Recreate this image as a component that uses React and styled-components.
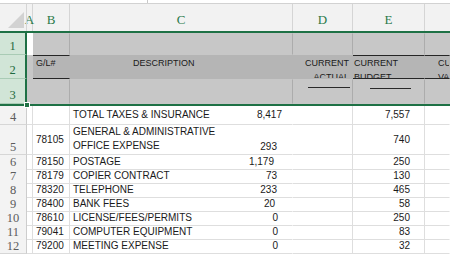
import React from 'react';
import styled, { createGlobalStyle } from 'styled-components';

const GREEN = '#1e7145';
const COLS = '27px 6px 37px 223px 60px 72px 1fr';

const GlobalStyle = createGlobalStyle`
  html, body { margin: 0; padding: 0; background: #fff; overflow: hidden; }
  body { font-family: "Liberation Sans", Arial, sans-serif; }
  * { box-sizing: border-box; }
`;

const Sheet = styled.div`
  width: 450px;
  height: 254px;
  overflow: hidden;
  background: #fff;
`;

const TopStrip = styled.div`
  height: 4px;
  display: flex;
  border-bottom: 1px solid #d2d2d2;
`;

const StripPart = styled.div`
  width: ${(p) => p.$w}px;
  border-right: 1px solid #c9c9c9;
`;

const Row = styled.div`
  display: grid;
  grid-template-columns: ${COLS};
  height: ${(p) => p.$h}px;
`;

const HeaderRow = styled(Row)`
  background: #f2f2f2;
  border-bottom: 2px solid ${GREEN};
`;

const ColHead = styled.div`
  display: flex;
  align-items: center;
  justify-content: center;
  padding-top: 5px;
  border-right: 1px solid ${(p) => (p.$last ? 'transparent' : '#d5d5d5')};
  font-family: "Liberation Serif", "Times New Roman", serif;
  font-size: 13px;
  color: #2a7a4a;
  overflow: visible;
  white-space: nowrap;
`;

const Corner = styled.div`
  position: relative;
  border-right: 1px solid #d5d5d5;
  svg { display: block; }
`;

const RowHead = styled.div`
  display: flex;
  align-items: flex-end;
  justify-content: center;
  padding-bottom: ${(p) => (p.$sel ? 1 : 0)}px;
  background: ${(p) => (p.$sel ? '#d1e5d7' : '#f3f3f3')};
  border-right: ${(p) => (p.$sel ? `2px solid ${GREEN}` : '1px solid #cdcdcd')};
  border-bottom: 1px solid ${(p) => (p.$sel ? '#a9cbb5' : '#d6d6d6')};
  font-family: "Liberation Serif", "Times New Roman", serif;
  font-size: 12.5px;
  line-height: 14px;
  color: ${(p) => (p.$sel ? '#1f6a40' : '#5c5c5c')};
`;

const Selection = styled.div`
  position: relative;
  border-bottom: 2px solid ${GREEN};
`;

const FillHandle = styled.div`
  position: absolute;
  left: 24px;
  bottom: -4px;
  width: 6px;
  height: 6px;
  background: ${GREEN};
  border: 1px solid #fff;
`;

const SelCell = styled.div`
  display: flex;
  flex-direction: column;
  align-items: ${(p) => ({ right: 'flex-end', center: 'center' }[p.$h] || 'flex-start')};
  padding: 0 ${(p) => p.$pr ?? 0}px 0 ${(p) => p.$pl ?? 3}px;
  background: ${(p) => p.$bg || '#c7c7c7'};
  border-right: 1px solid ${(p) => (p.$line ? '#acacac' : 'transparent')};
  border-top: 1px solid ${(p) => (p.$rule ? '#262626' : 'transparent')};
  border-bottom: 1px solid ${(p) => (p.$rule ? '#262626' : 'transparent')};
  font-size: 9px;
  line-height: 14px;
  color: #1a1a1a;
  white-space: nowrap;
  overflow: hidden;
`;

const Underline = styled.div`
  width: ${(p) => p.$w}px;
  margin: ${(p) => p.$top}px ${(p) => p.$mr || 0}px 0 ${(p) => p.$ml || 0}px;
  border-top: 1px solid #2a2a2a;
`;

const Cell = styled.div`
  display: flex;
  align-items: ${(p) => ({ top: 'flex-start', bottom: 'flex-end' }[p.$v] || 'center')};
  justify-content: ${(p) => ({ right: 'flex-end', center: 'center' }[p.$h] || 'flex-start')};
  padding: 0 ${(p) => p.$pr ?? 2}px 0 ${(p) => p.$pl ?? 3}px;
  border-right: 1px solid ${(p) => (p.$noLine ? 'transparent' : '#dedede')};
  border-bottom: 1px solid #dedede;
  font-size: 10px;
  line-height: 14px;
  color: #1a1a1a;
  white-space: nowrap;
  overflow: hidden;
`;

const DescCell = styled(Cell)`
  display: grid;
  grid-template-columns: 1fr auto;
  align-items: stretch;
  padding-right: 0;
`;

const Label = styled.div`
  align-self: ${(p) => (p.$v === 'top' ? 'start' : 'center')};
`;

const Amount = styled.div`
  align-self: ${(p) => (p.$v === 'bottom' ? 'end' : 'center')};
  margin-right: ${(p) => p.$pr}px;
`;

const rows = [
  { n: 4, h: 19, code: '', desc: ['TOTAL TAXES & INSURANCE'], actual: '8,417', apr: 10, budget: '7,557' },
  { n: 5, h: 30, code: '78105', desc: ['GENERAL & ADMINISTRATIVE', 'OFFICE EXPENSE'], actual: '293', apr: 15, budget: '740', tall: true },
  { n: 6, h: 14, code: '78150', desc: ['POSTAGE'], actual: '1,179', apr: 18, budget: '250' },
  { n: 7, h: 14, code: '78179', desc: ['COPIER CONTRACT'], actual: '73', apr: 15, budget: '130' },
  { n: 8, h: 14, code: '78320', desc: ['TELEPHONE'], actual: '233', apr: 15, budget: '465' },
  { n: 9, h: 14, code: '78400', desc: ['BANK FEES'], actual: '20', apr: 17, budget: '58' },
  { n: 10, h: 14, code: '78610', desc: ['LICENSE/FEES/PERMITS'], actual: '0', apr: 14, budget: '250' },
  { n: 11, h: 14, code: '79041', desc: ['COMPUTER EQUIPMENT'], actual: '0', apr: 14, budget: '83' },
  { n: 12, h: 14, code: '79200', desc: ['MEETING EXPENSE'], actual: '0', apr: 14, budget: '32' },
];

const DataRow = ({ r }) => (
  <Row $h={r.h}>
    <RowHead>{r.n}</RowHead>
    <Cell />
    <Cell>{r.code}</Cell>
    <DescCell $noLine>
      <Label $v={r.tall ? 'top' : 'center'}>
        {r.desc.map((d) => (
          <div key={d}>{d}</div>
        ))}
      </Label>
      <Amount $v={r.tall ? 'bottom' : 'center'} $pr={r.apr}>
        {r.actual}
      </Amount>
    </DescCell>
    <Cell />
    <Cell $h="right" $pr={14}>
      {r.budget}
    </Cell>
    <Cell $noLine />
  </Row>
);

const App = () => (
  <>
    <GlobalStyle />
    <Sheet>
      <TopStrip>
        <StripPart $w={148} />
      </TopStrip>

      <HeaderRow $h={29}>
        <Corner>
          <svg width="26" height="27" viewBox="0 0 26 27">
            <polygon points="8,24 24,8 24,24" fill="#d2d2d2" />
          </svg>
        </Corner>
        <ColHead>A</ColHead>
        <ColHead>B</ColHead>
        <ColHead>C</ColHead>
        <ColHead>D</ColHead>
        <ColHead>E</ColHead>
        <ColHead $last />
      </HeaderRow>

      <Selection>
        <Row $h={22}>
          <RowHead $sel>1</RowHead>
          <SelCell $bg="#fff" />
          <SelCell $line />
          <SelCell $line />
          <SelCell $line />
          <SelCell $line />
          <SelCell />
        </Row>
        <Row $h={24}>
          <RowHead $sel>2</RowHead>
          <SelCell />
          <SelCell $bg="#b5b5b5" $rule>G/L#</SelCell>
          <SelCell $bg="#b5b5b5" $pl={63}>DESCRIPTION</SelCell>
          <SelCell $bg="#b5b5b5" $h="right" $pr={3}>
            <div>CURRENT</div>
            <div>ACTUAL</div>
          </SelCell>
          <SelCell $bg="#b5b5b5" $rule $pl={1}>
            <div>CURRENT</div>
            <div>BUDGET</div>
          </SelCell>
          <SelCell $bg="#b5b5b5" $rule $pl={13}>
            <div>CURRENT</div>
            <div>VARIANCE</div>
          </SelCell>
        </Row>
        <Row $h={25}>
          <RowHead $sel>3</RowHead>
          <SelCell />
          <SelCell $line />
          <SelCell $line />
          <SelCell $line $h="right" $pr={2}>
            <Underline $w={42} $top={7} />
          </SelCell>
          <SelCell $line $pl={0}>
            <Underline $w={41} $top={8} $ml={17} />
          </SelCell>
          <SelCell />
        </Row>
        <FillHandle />
      </Selection>

      {rows.map((r) => (
        <DataRow key={r.n} r={r} />
      ))}
    </Sheet>
  </>
);

export default App;
